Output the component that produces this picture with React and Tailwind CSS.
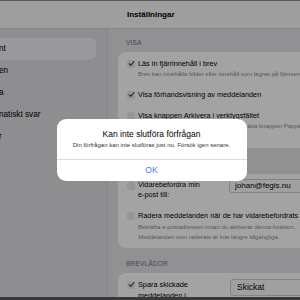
const sidebarItems = [
    { label: 'nt', active: true },
    { label: 'en' },
    { label: 'a' },
    { label: 'natiskt svar' },
    { label: 'r' },
];

function Check({ on = false }) {
    return (
        <span className="mt-[1.5px] flex h-[8px] w-[8px] shrink-0 items-center justify-center rounded-[2px] bg-[#ebebf0]">
            {on && (
                <svg viewBox="0 0 10 10" className="h-[7px] w-[7px]">
                    <path
                        d="M1.6 5.3 4 7.7 8.6 2.1"
                        fill="none"
                        stroke="#3a3a3c"
                        strokeWidth="1.5"
                        strokeLinecap="round"
                        strokeLinejoin="round"
                    />
                </svg>
            )}
        </span>
    );
}

function SectionLabel({ children, className = '' }) {
    return (
        <div
            className={`pl-[8px] text-[6.5px] leading-[8px] tracking-[0.2px] text-[#6d6d72] ${className}`}
        >
            {children}
        </div>
    );
}

function Option({ on, title, lines = [], titleLeading = 'leading-[11px]' }) {
    return (
        <div className="flex gap-[3px]">
            <Check on={on} />
            <div className="whitespace-nowrap">
                <div className={`text-[7.3px] text-black ${titleLeading}`}>{title}</div>
                {lines.map((line) => (
                    <div key={line} className="text-[6px] leading-[10px] text-[#8a8a8e]">
                        {line}
                    </div>
                ))}
            </div>
        </div>
    );
}

export default function App() {
    return (
        <div className="relative h-[300px] w-[300px] overflow-hidden bg-[#e3e3e8] font-['Liberation_Sans',Arial,sans-serif]">
            <div className="flex h-full flex-col">
                <div className="h-[1px] bg-[#8a8a8e]" />
                <header className="flex h-[28px] shrink-0 items-center border-b border-[#d4d4d9] bg-[#f7f7f9]">
                    <h1 className="pl-[127px] text-[8px] font-bold text-black">Inställningar</h1>
                </header>

                <div className="flex min-h-0 flex-1 overflow-hidden">
                    <aside className="w-[108px] shrink-0 border-r border-[#cfcfd4] bg-[#dedee3] pt-[9px] pr-[11px]">
                        {sidebarItems.map((item) => (
                            <div
                                key={item.label}
                                className={`flex h-[22px] items-center rounded-r-[6px] text-[8.2px] text-black ${
                                    item.active ? 'bg-[#efeff3]' : ''
                                }`}
                            >
                                <span className="-ml-[1px] whitespace-nowrap">{item.label}</span>
                            </div>
                        ))}
                    </aside>

                    <main className="w-[260px] shrink-0 pt-[10px] pl-[10px]">
                        <SectionLabel className="mb-[5px]">VISA</SectionLabel>
                        <div className="flex flex-col gap-[10px] rounded-[8px] bg-white pt-[6px] pb-[7px] pl-[9px]">
                            <Option
                                on
                                title="Läs in fjärrinnehåll i brev"
                                lines={['Brev kan innehålla bilder eller innehåll som lagras på fjärrservrar.']}
                            />
                            <Option on title="Visa förhandsvisning av meddelanden" />
                            <Option
                                title="Visa knappen Arkivera i verktygsfältet"
                                lines={[
                                    'Knappen Arkivera kommer i stället att ersätta knappen Papperskorg',
                                    'i verktygsfältet.',
                                ]}
                            />
                        </div>

                        <SectionLabel className="mt-[13px] mb-[5px]">VIDAREBEFORDRA</SectionLabel>
                        <div className="flex flex-col gap-[10px] rounded-[8px] bg-white pt-[6px] pb-[6px] pl-[9px]">
                            <div className="flex items-start gap-[3px]">
                                <Check />
                                <div className="w-[88px] shrink-0 text-[7.3px] leading-[10px] text-black">
                                    <div>Vidarebefordra min</div>
                                    <div>e-post till:</div>
                                </div>
                                <div className="-mt-[1px] flex h-[14px] w-[110px] items-center rounded-[3px] border border-[#cdcdd2] bg-[#fbfbfc] pl-[5px] text-[8px] text-black">
                                    johan@fegis.nu
                                </div>
                            </div>
                            <Option
                                title="Radera meddelanden när de har vidarebefordrats"
                                titleLeading="leading-[12px]"
                                lines={[
                                    'Bekräfta e-postadressen innan du aktiverar denna funktion.',
                                    'Meddelanden som raderats är inte längre tillgängliga.',
                                ]}
                            />
                        </div>

                        <SectionLabel className="mt-[12px] mb-[5px]">BREVLÅDOR</SectionLabel>
                        <div className="rounded-[8px] bg-white pt-[6px] pb-[6px] pl-[9px]">
                            <div className="flex items-start gap-[3px]">
                                <Check on />
                                <div className="w-[89px] shrink-0 text-[7.3px] leading-[11px] text-black">
                                    <div>Spara skickade</div>
                                    <div>meddelanden i</div>
                                </div>
                                <div className="flex h-[17px] w-[110px] items-center rounded-[3px] border border-[#cdcdd2] bg-[#fbfbfc] pl-[6px] text-[8.5px] text-black">
                                    Skickat
                                </div>
                            </div>
                        </div>
                    </main>
                </div>

                <div className="h-[3px] shrink-0 bg-[#5a5a5e]" />
            </div>

            <div className="absolute inset-0 flex items-center justify-center bg-black/[0.36]">
                <div className="ml-[3px] w-[190px] overflow-hidden rounded-[9px] bg-white text-center">
                    <div className="pt-[10px] pb-[10px]">
                        <div className="text-[8.5px] leading-[10px] text-black">Kan inte slutföra förfrågan</div>
                        <div className="mt-[2px] text-[6px] leading-[8px] text-[#333336]">
                            Din förfrågan kan inte slutföras just nu. Försök igen senare.
                        </div>
                    </div>
                    <div className="flex h-[22px] items-center justify-center border-t border-[#dcdce0] text-[8.5px] text-[#3a82f7]">
                        OK
                    </div>
                </div>
            </div>
        </div>
    );
}
